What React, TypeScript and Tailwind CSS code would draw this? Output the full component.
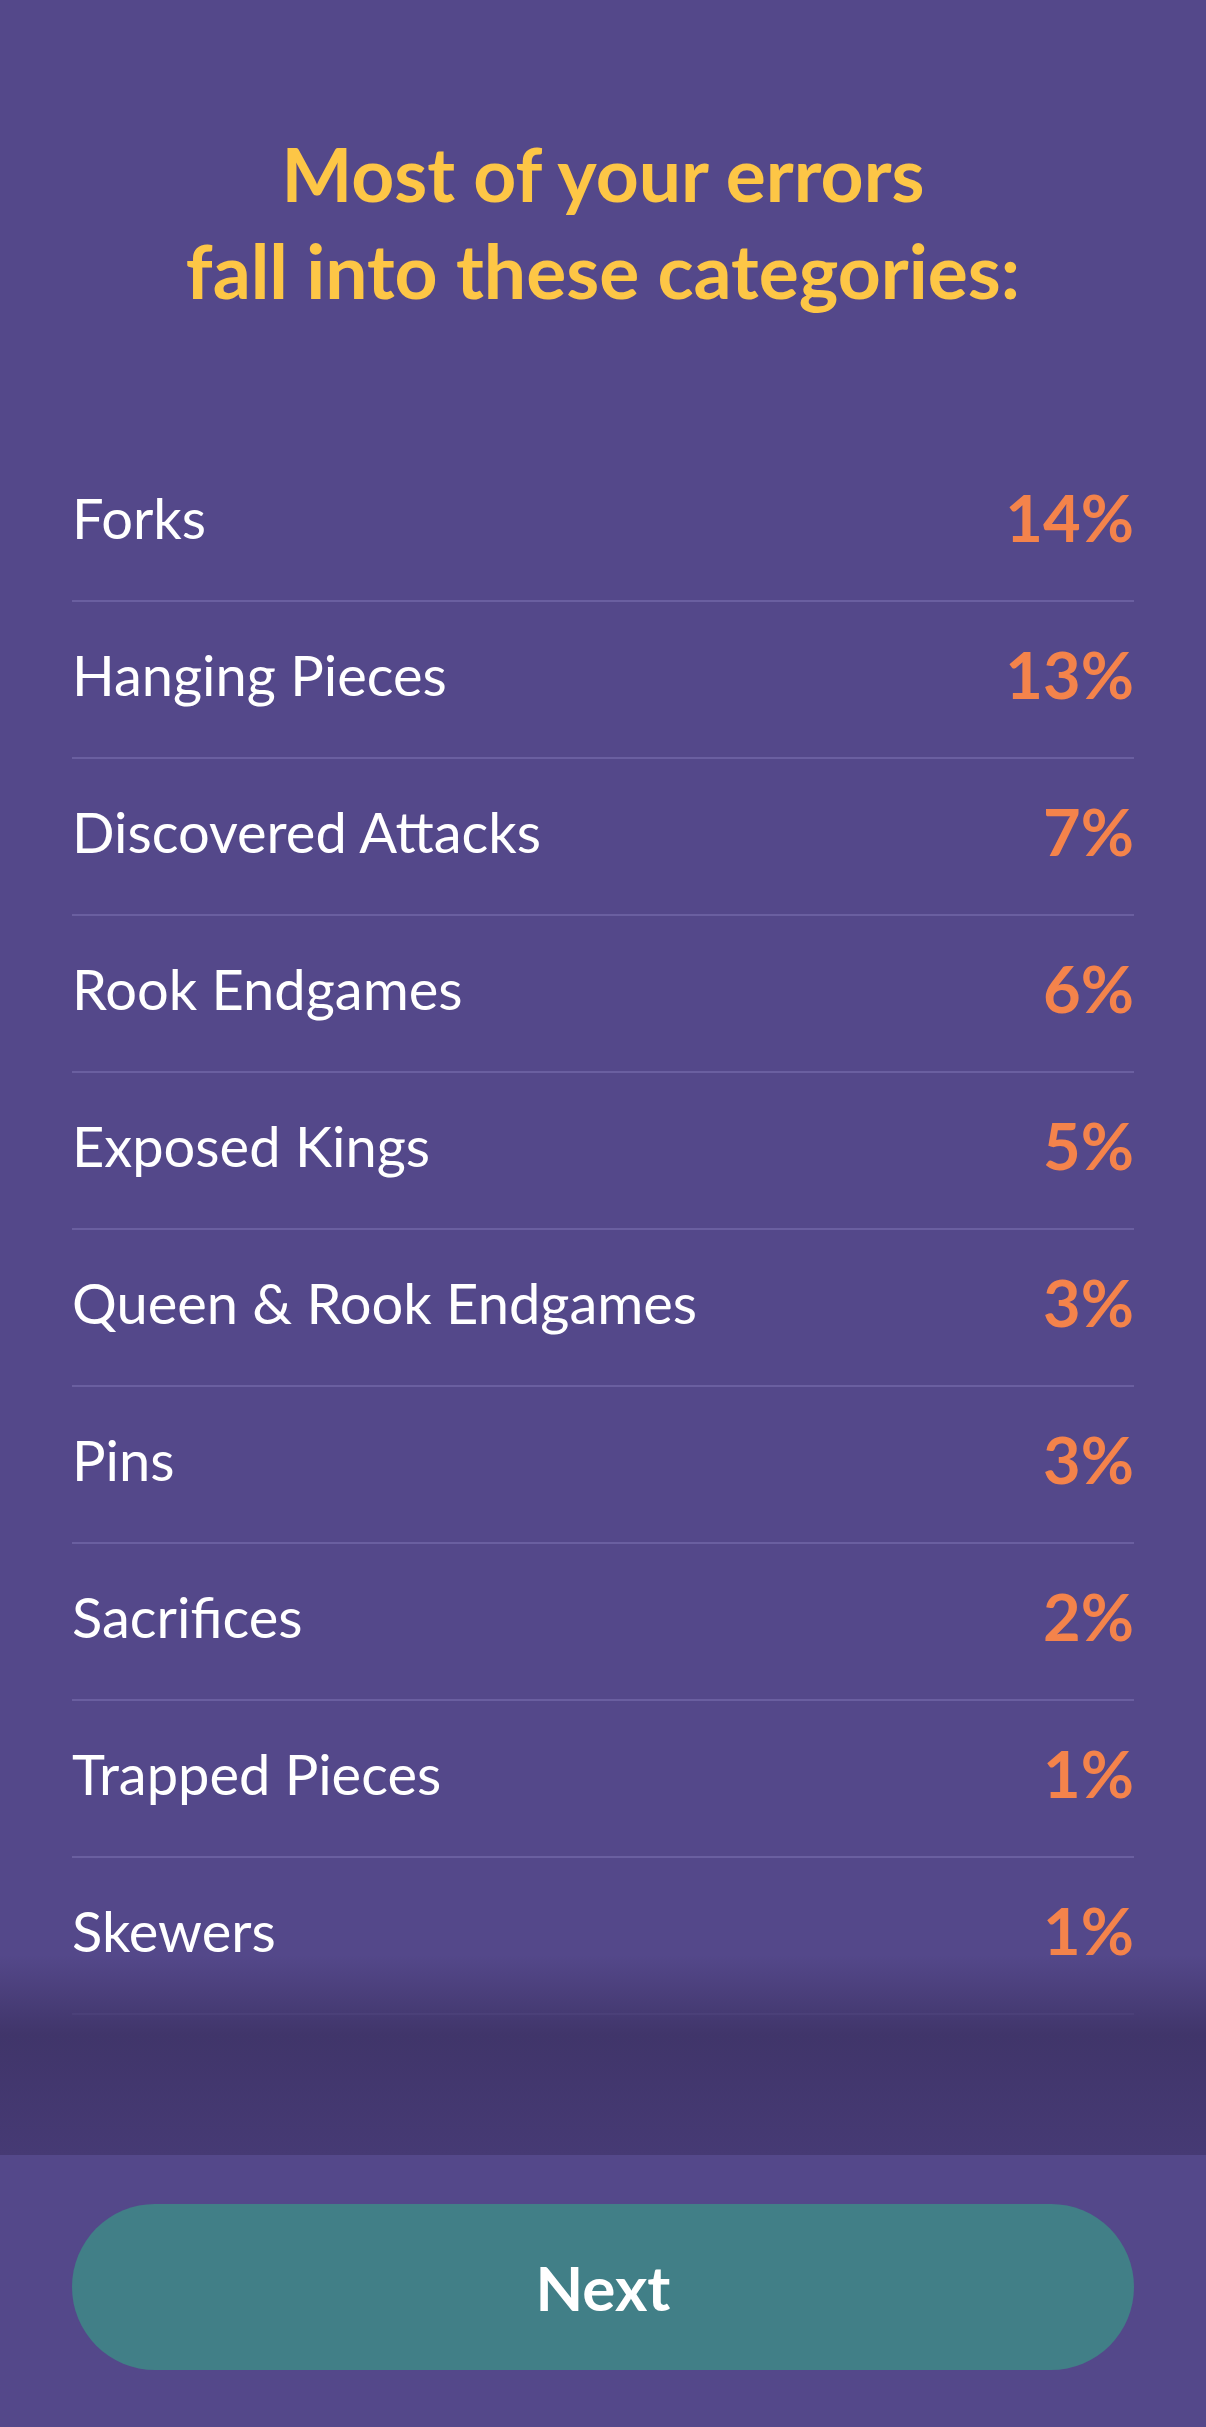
import React from "react";

const rows: [string, string][] = [
  ["Forks", "14%"],
  ["Hanging Pieces", "13%"],
  ["Discovered Attacks", "7%"],
  ["Rook Endgames", "6%"],
  ["Exposed Kings", "5%"],
  ["Queen & Rook Endgames", "3%"],
  ["Pins", "3%"],
  ["Sacrifices", "2%"],
  ["Trapped Pieces", "1%"],
  ["Skewers", "1%"],
];

export default function App() {
  return (
    <div
      className="h-[2427px] w-full flex flex-col bg-[#54488a] overflow-hidden"
      style={{ fontFamily: "Lato, 'Noto Sans', sans-serif" }}
    >
      <div className="relative flex-1 overflow-hidden">
        <h1 className="pt-[125px] text-center text-[75px] leading-[97px] font-bold text-[#fdc646]">
          Most of your errors
          <br />
          fall into these categories:
        </h1>
        <div className="mt-[126px] px-[72px]">
          {rows.map(([label, pct]) => (
            <div
              key={label}
              className="h-[157px] pb-[10px] flex items-center justify-between border-b-2 border-[#6a5fa0]"
            >
              <span className="text-[56px] text-white">{label}</span>
              <span className="text-[65px] font-bold text-[#f4834b]">{pct}</span>
            </div>
          ))}
        </div>
        <div className="absolute left-0 right-0 bottom-0 h-[200px] bg-linear-to-b from-transparent via-[#40356a] via-40% to-[#463a74]" />
      </div>
      <div className="h-[272px] px-[72px] pt-[49px]">
        <button className="w-full h-[166px] rounded-full bg-[#417f87] text-white text-[62px] font-bold">
          Next
        </button>
      </div>
    </div>
  );
}
